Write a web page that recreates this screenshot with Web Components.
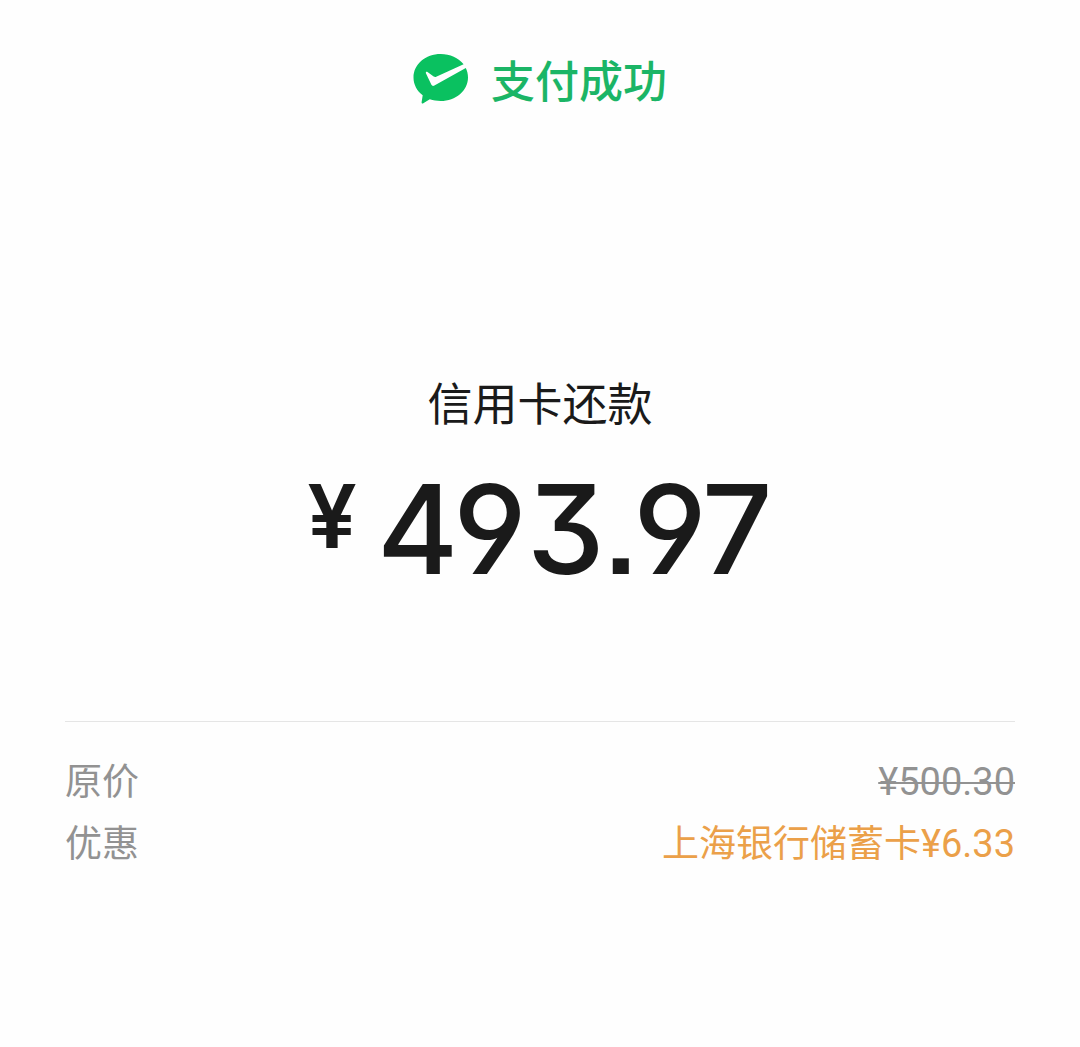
<!DOCTYPE html>
<html lang="zh-CN">
<head>
  <meta charset="UTF-8">
  <meta name="viewport" content="width=device-width, initial-scale=1.0">
  <title>支付成功</title>
  <style>
    body {
      margin: 0;
      background: #fefefe;
      color: #1a1a1a;
      font-family: "Noto Sans CJK SC", sans-serif;
    }
  </style>
</head>
<body>
  <pay-receipt>
    <pay-status slot="status">支付成功</pay-status>
    <pay-amount slot="amount" currency="¥" value="493.97">信用卡还款</pay-amount>
    <pay-row label="原价"><s>¥500.30</s></pay-row>
    <pay-row label="优惠" highlight>上海银行储蓄卡<span>¥6.33</span></pay-row>
  </pay-receipt>

  <!-- page frame: status, amount, then the list of details -->
  <template id="pay-receipt">
    <style>
      :host {
        display: block;
        padding: 47px 65px;
      }
      .details {
        margin-top: 127px;
        padding-top: 26px;
        border-top: 1px solid #e5e5e5;
      }
    </style>
    <main>
      <slot name="status"></slot>
      <slot name="amount"></slot>
      <div class="details"><slot></slot></div>
    </main>
  </template>

  <template id="pay-status">
    <style>
      :host {
        display: flex;
        align-items: center;
        justify-content: center;
        gap: 22px;
        color: #1bb566;
        font-size: 44px;
        font-weight: 500;
        line-height: 64px;
      }
      svg {
        display: block;
        width: 56px;
        height: 50px;
      }
    </style>
    <svg viewBox="0 0 56 50" aria-hidden="true">
      <path fill="#0ac160" d="M27.700 0C12.500 0 0.500 10.300 0.500 23.400C0.500 30.500 4 36.900 9.700 41.200L8.600 48.200C8.500 49.300 9.300 49.800 10.300 49.300L16.800 45.300C20.200 46.300 23.900 46.900 27.700 46.900C42.800 46.900 55 36.500 55 23.400C55 20 54.200 16.900 52.800 14L21.400 31.500C20.100 32.200 19 31.900 18.400 30.800L12.900 19.300C12.500 18 13.500 17.300 14.500 18L20.700 22.500C21.500 23 22.400 23.100 23.200 22.700L50.600 10.300C45.500 4 37 0 27.700 0Z"/>
    </svg>
    <slot></slot>
  </template>

  <template id="pay-amount">
    <style>
      :host {
        display: block;
        margin-top: 259px;
        text-align: center;
      }
      .title {
        font-size: 45px;
        line-height: 64px;
      }
      .figure {
        display: flex;
        justify-content: center;
        align-items: flex-start;
        gap: 20px;
        margin-top: 30px;
        font-family: Inter, sans-serif;
        font-weight: 500;
        /* open 6 and 9, flat-topped 3, square punctuation */
        font-feature-settings: "cv03", "cv04", "cv09", "ss07";
      }
      .currency {
        font-size: 88px;
        font-weight: 600;
        line-height: 104px;
      }
      .value {
        font-size: 124px;
        line-height: 130px;
      }
    </style>
    <div class="title"><slot></slot></div>
    <div class="figure">
      <span class="currency"></span>
      <span class="value"></span>
    </div>
  </template>

  <template id="pay-row">
    <style>
      :host {
        display: flex;
        justify-content: space-between;
        color: #929292;
        font-size: 37px;
        line-height: 62px;
      }
      :host([highlight]) .content {
        color: #eba049;
      }
      ::slotted(*) {
        font-family: Roboto, sans-serif;
        font-size: 38px;
        line-height: 40px;
        text-decoration-thickness: 2px;
      }
    </style>
    <span class="label"></span>
    <span class="content"><slot></slot></span>
  </template>

  <script>
    // clone the template into an open shadow root
    const attachTemplate = (element, id) => {
      const template = document.querySelector(`template#${id}`);
      const root = element.attachShadow({ mode: 'open' });
      root.appendChild(document.importNode(template.content, true));
      return root;
    };

    class PayReceipt extends HTMLElement {
      connectedCallback() {
        attachTemplate(this, 'pay-receipt');
      }
    }

    class PayStatus extends HTMLElement {
      connectedCallback() {
        attachTemplate(this, 'pay-status');
      }
    }

    class PayAmount extends HTMLElement {
      connectedCallback() {
        const root = attachTemplate(this, 'pay-amount');
        // currency and value come from the attributes with the same name
        ['currency', 'value'].forEach(name => {
          root.querySelector(`.${name}`).textContent = this.getAttribute(name);
        });
      }
    }

    class PayRow extends HTMLElement {
      connectedCallback() {
        const root = attachTemplate(this, 'pay-row');
        root.querySelector('.label').textContent = this.getAttribute('label');
      }
    }

    customElements.define('pay-receipt', PayReceipt);
    customElements.define('pay-status', PayStatus);
    customElements.define('pay-amount', PayAmount);
    customElements.define('pay-row', PayRow);
  </script>
</body>
</html>
